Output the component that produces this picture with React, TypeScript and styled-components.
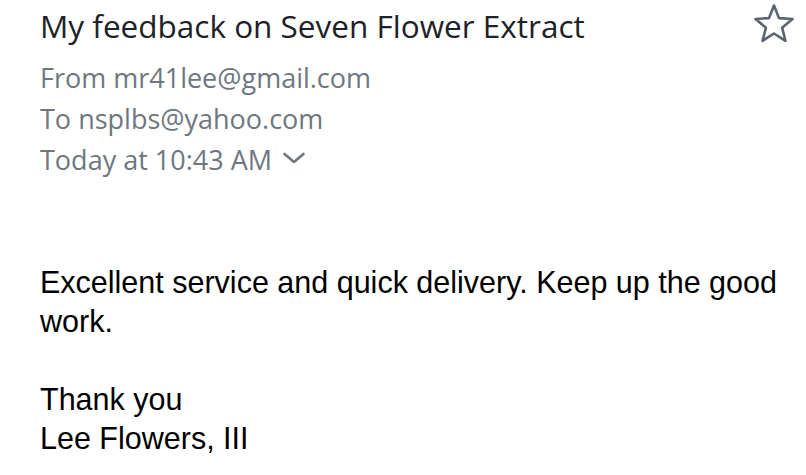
import React from "react";
import styled, { createGlobalStyle } from "styled-components";

const Global = createGlobalStyle`
  html, body { margin: 0; padding: 0; background: #fff; }
`;

const Page = styled.div`
  width: 806px;
  height: 475px;
  box-sizing: border-box;
  padding: 2px 10px 0 40px;
  display: flex;
  flex-direction: column;
`;

const Header = styled.div`
  display: flex;
  justify-content: space-between;
  align-items: flex-start;
`;

const Title = styled.h1`
  margin: 2px 0 0 0;
  font-family: "Open Sans", sans-serif;
  font-weight: 400;
  font-size: 31.5px;
  line-height: 44px;
  color: #1d2228;
`;

const StarButton = styled.div`
  width: 44px;
  height: 44px;
  display: flex;
  color: #5a6470;
`;

const Meta = styled.div`
  display: flex;
  flex-direction: column;
  margin-top: 9px;
`;

const MetaLine = styled.div`
  font-family: "Open Sans", sans-serif;
  font-size: 27px;
  line-height: 41px;
  color: #6e7780;
  display: flex;
  align-items: center;
  gap: 10px;
`;

const Chevron = styled.svg`
  margin-top: -3px;
`;

const Body = styled.div`
  margin-top: 83px;
  font-family: "Liberation Sans", Arial, sans-serif;
  font-size: 30.5px;
  line-height: 39px;
  color: #000;
`;

const Para = styled.p`
  margin: 0 0 39px 0;
`;

export default function App() {
  return (
    <>
      <Global />
      <Page>
        <Header>
          <Title>My feedback on Seven Flower Extract</Title>
          <StarButton>
            <svg width="44" height="44" viewBox="0 0 44 44" fill="none" stroke="currentColor" strokeWidth="2.6" strokeLinejoin="round">
              <path d="M22 3.5L27 16.12L40.55 16.97L30.08 25.63L33.46 38.78L22 31.5L10.54 38.78L13.92 25.63L3.45 16.97L17 16.12Z" />
            </svg>
          </StarButton>
        </Header>
        <Meta>
          <MetaLine>From mr41lee@gmail.com</MetaLine>
          <MetaLine>To nsplbs@yahoo.com</MetaLine>
          <MetaLine>
            Today at 10:43 AM
            <Chevron width="24" height="12" viewBox="0 0 24 12" fill="none" stroke="currentColor" strokeWidth="2.6" strokeLinecap="round" strokeLinejoin="round">
              <path d="M2.5 2l9.5 8 9.5-8" />
            </Chevron>
          </MetaLine>
        </Meta>
        <Body>
          <Para>Excellent service and quick delivery. Keep up the good work.</Para>
          <Para>Thank you<br />Lee Flowers, III</Para>
        </Body>
      </Page>
    </>
  );
}
